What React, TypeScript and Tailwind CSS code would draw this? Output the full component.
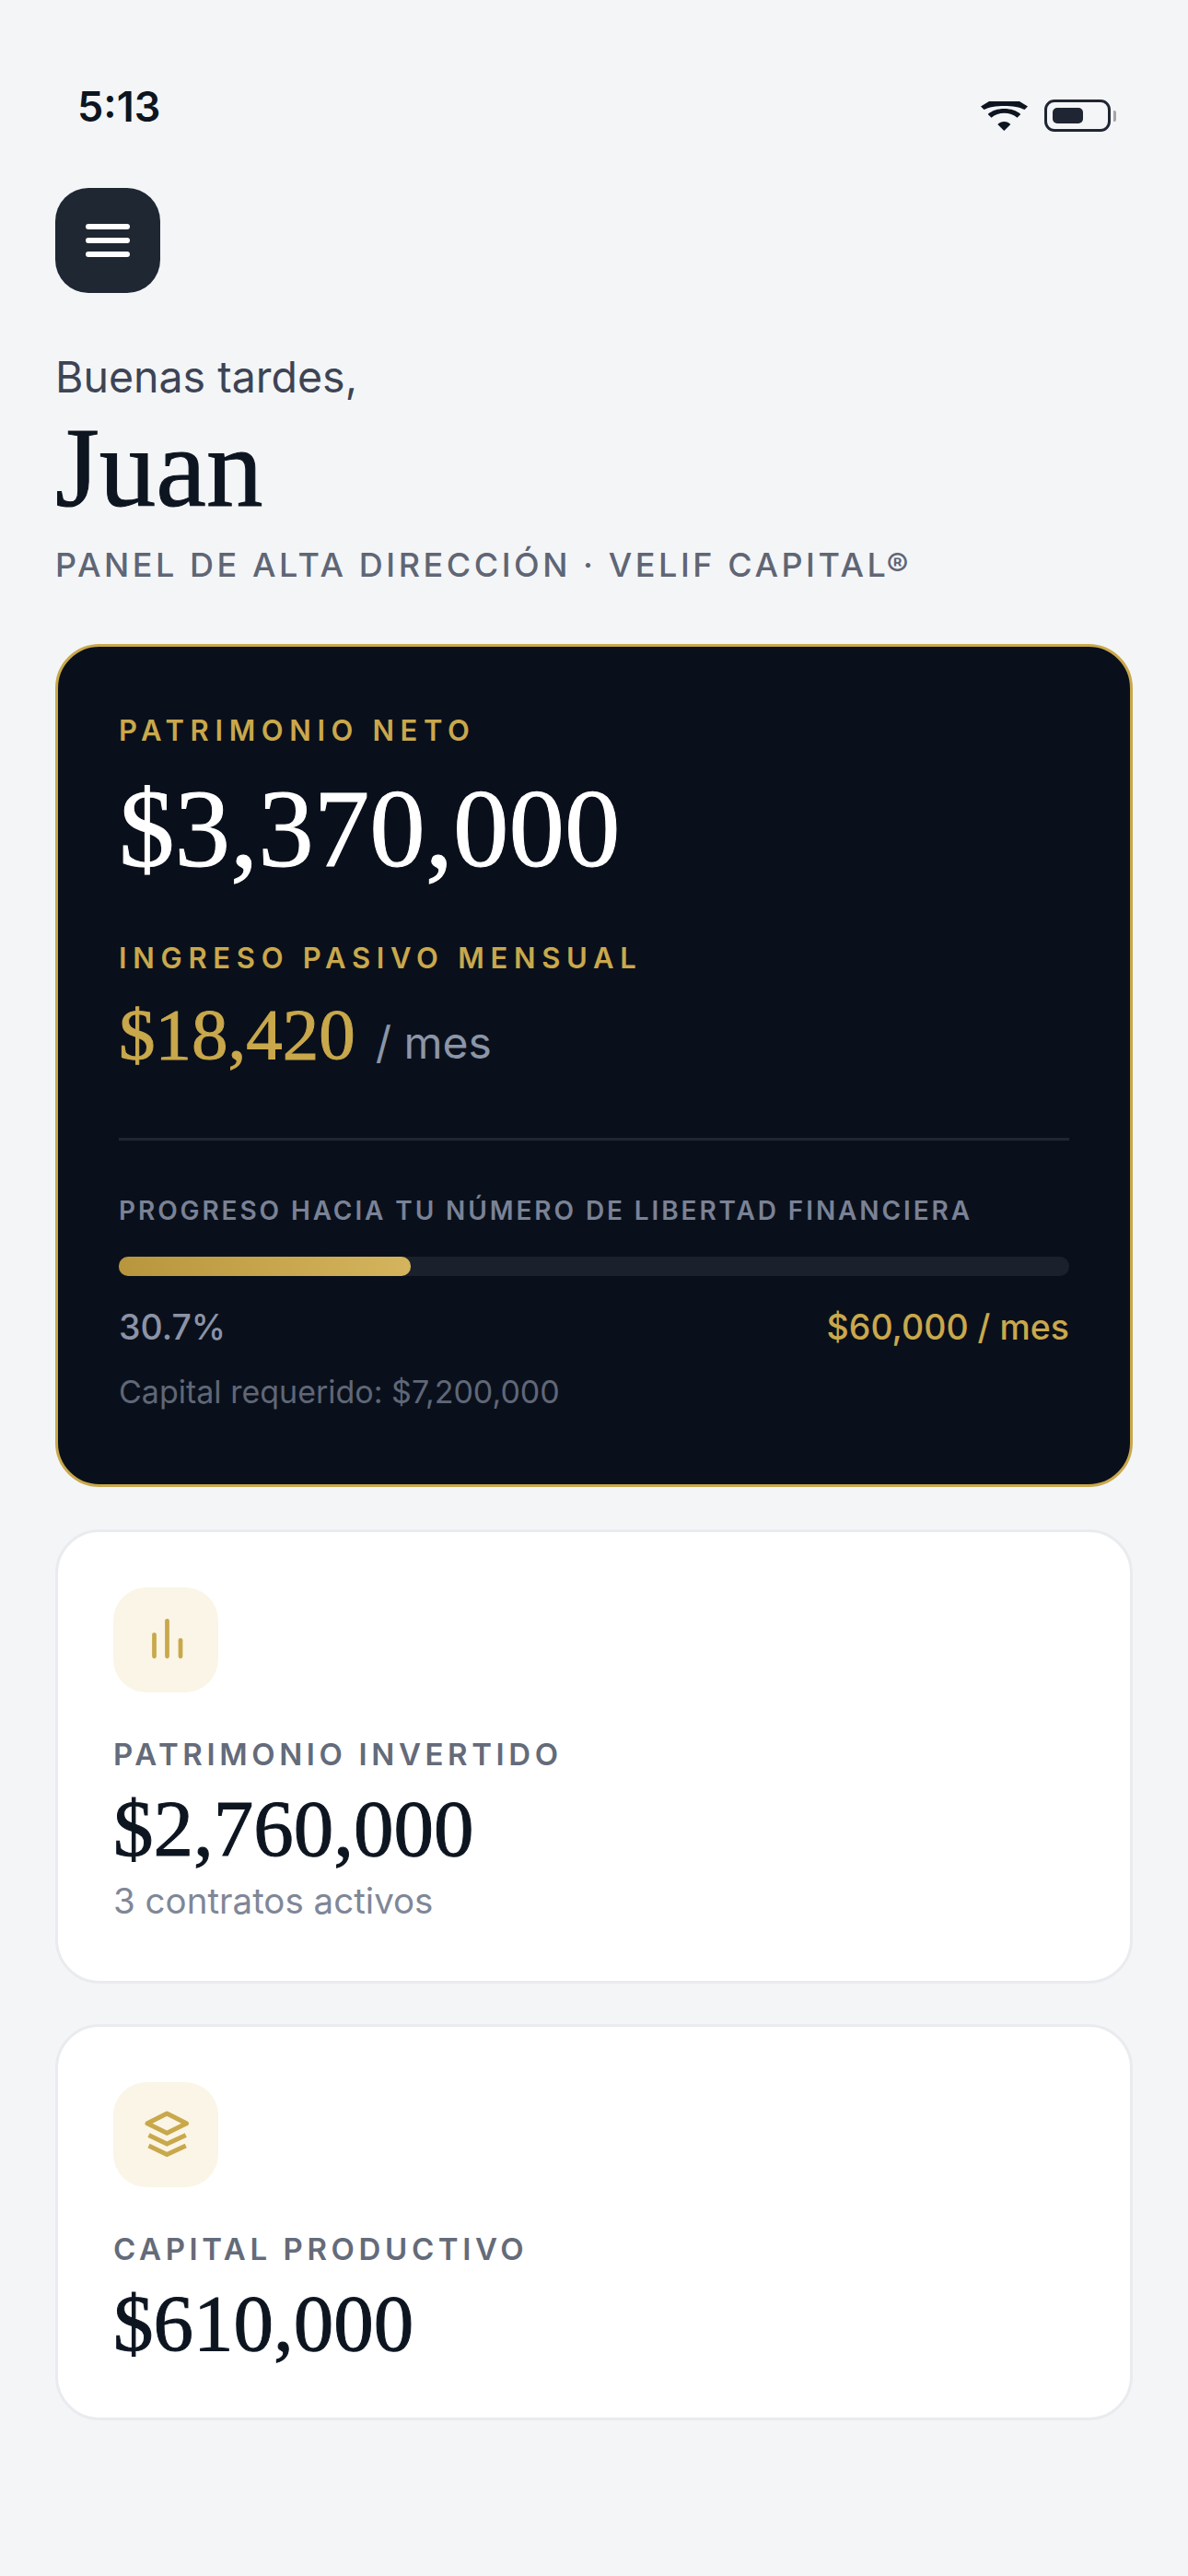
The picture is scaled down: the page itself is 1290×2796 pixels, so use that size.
const serif = "font-['Liberation_Serif',serif] [-webkit-text-stroke:1px_currentColor]";

function BarsIcon() {
  return (
    <svg viewBox="0 0 24 24" className="w-[60px] h-[60px]" fill="none" stroke="#c9a84c" strokeWidth="1.9" strokeLinecap="round">
      <path d="M7 19.1V9.7" />
      <path d="M12.6 19.1V3.7" />
      <path d="M18.4 19.1V12.1" />
    </svg>
  );
}

function LayersIcon() {
  return (
    <svg viewBox="0 0 24 24" className="w-[60px] h-[60px]" fill="none" stroke="#c9a84c" strokeWidth="2" strokeLinejoin="round">
      <path d="M12.5 2.8L21 7.1L12.5 11.3L4 7.1Z" />
      <path d="M4.6 12.2L12.5 16L20.7 12.2" strokeLinejoin="miter" />
      <path d="M4.6 16.8L12.5 20.6L20.7 16.8" strokeLinejoin="miter" />
    </svg>
  );
}

function StatCard({ label, value, note, icon }: { label: string; value: string; note?: string; icon: React.ReactNode }) {
  return (
    <div className="bg-white border-[3px] border-[#e9ebef] rounded-[48px] px-[60px] pt-[60px] pb-[52px]">
      <div className="w-[114px] h-[114px] rounded-[36px] bg-[#faf5e6] flex items-center justify-center">{icon}</div>
      <div className="mt-[47px] text-[33px] leading-[40px] font-semibold tracking-[4.6px] text-[#646b7a]">{label}</div>
      <div className={`${serif} mt-[11px] text-[87px] leading-[100px] text-[#0d1520]`}>{value}</div>
      {note && <div className="mt-[4px] mb-[11px] text-[38.5px] leading-[48px] text-[#7f8798]">{note}</div>}
    </div>
  );
}

export default function App() {
  return (
    <div className="w-[1290px] min-h-[2796px] bg-[#f4f5f7] px-[60px] pt-[86px] font-['Inter',sans-serif]">
      <div className="flex items-center justify-between pl-[24px] pr-[18px] h-[60px]">
        <span className="text-[45px] leading-[60px] font-semibold text-[#0d1520]">5:13</span>
        <div className="flex items-center gap-[18px] mt-[19px]">
          <svg viewBox="0 0 51 32" className="w-[51px] h-[32px]" fill="#0d1520">
            <path d="M0 5.5L9 0H42L51 5.5L47.5 9C38 3.5 13 3.5 3.5 9Z" />
            <path d="M7.7 14C16 6 35 6 43.3 14L39.5 17.7C32 11 19 11 11.5 17.7Z" />
            <path d="M18.3 25C22 21 29 21 32.3 25L25.3 32Z" />
          </svg>
          <div className="flex items-center gap-[3px]">
            <div className="w-[72px] h-[35px] border-[3px] border-[#1f2532] rounded-[11px] px-[6px] py-[6px]">
              <div className="w-[33px] h-full bg-[#1f2532] rounded-[5px]" />
            </div>
            <div className="w-[3px] h-[12px] bg-[#a3a5a9] rounded-r-[2px]" />
          </div>
        </div>
      </div>

      <button className="mt-[58px] w-[114px] h-[114px] rounded-[36px] bg-[#1f2733] flex flex-col items-center justify-center gap-[9px]">
        <span className="block w-[48px] h-[6px] rounded-full bg-white" />
        <span className="block w-[48px] h-[6px] rounded-full bg-white" />
        <span className="block w-[48px] h-[6px] rounded-full bg-white" />
      </button>

      <div className="mt-[62px] text-[46.5px] leading-[58px] text-[#3d4454]">Buenas tardes,</div>
      <div className={`${serif} mt-[5px] text-[123px] leading-[130px] text-[#0d1520]`}>Juan</div>
      <div className="mt-[18px] text-[36px] leading-[44px] font-medium tracking-[3.55px] text-[#5f6675]">PANEL DE ALTA DIRECCIÓN · VELIF CAPITAL®</div>

      <div className="mt-[64px] bg-[#0a101b] border-[3px] border-[#c9a84c] rounded-[48px] px-[66px] pt-[71px] pb-[78px]">
        <div className="text-[31px] leading-[40px] font-semibold tracking-[6.6px] text-[#c9a84c]">PATRIMONIO NETO</div>
        <div className={`${serif} mt-[16px] text-[121px] leading-[140px] text-white`}>$3,370,000</div>
        <div className="mt-[51px] text-[31px] leading-[40px] font-semibold tracking-[6.7px] text-[#c9a84c]">INGRESO PASIVO MENSUAL</div>
        <div className="mt-[15px] flex items-baseline gap-[22px]">
          <span className={`${serif} text-[79px] leading-[96px] text-[#c9a84c]`}>$18,420</span>
          <span className="text-[48px] leading-[60px] text-[#8b95a8]">/ mes</span>
        </div>
        <div className="mt-[64px] h-[3px] bg-[#1f2733]" />
        <div className="mt-[58px] text-[28px] leading-[36px] font-semibold tracking-[2.9px] text-[#7a8296]">PROGRESO HACIA TU NÚMERO DE LIBERTAD FINANCIERA</div>
        <div className="mt-[32px] h-[21px] rounded-[10px] bg-[#1a202c]">
          <div className="w-[30.7%] h-full rounded-[10px] bg-linear-to-r from-[#b8963e] to-[#d4b45c]" />
        </div>
        <div className="mt-[32px] flex justify-between text-[37.5px] leading-[48px] font-medium">
          <span className="text-[#8b93a7]">30.7%</span>
          <span className="text-[#c9a84c]">$60,000 / mes</span>
        </div>
        <div className="mt-[24px] text-[34px] leading-[44px] text-[#5f6778]">Capital requerido: $7,200,000</div>
      </div>

      <div className="mt-[46px] flex flex-col gap-[44px]">
        <StatCard label="PATRIMONIO INVERTIDO" value="$2,760,000" note="3 contratos activos" icon={<BarsIcon />} />
        <StatCard label="CAPITAL PRODUCTIVO" value="$610,000" icon={<LayersIcon />} />
      </div>
    </div>
  );
}
